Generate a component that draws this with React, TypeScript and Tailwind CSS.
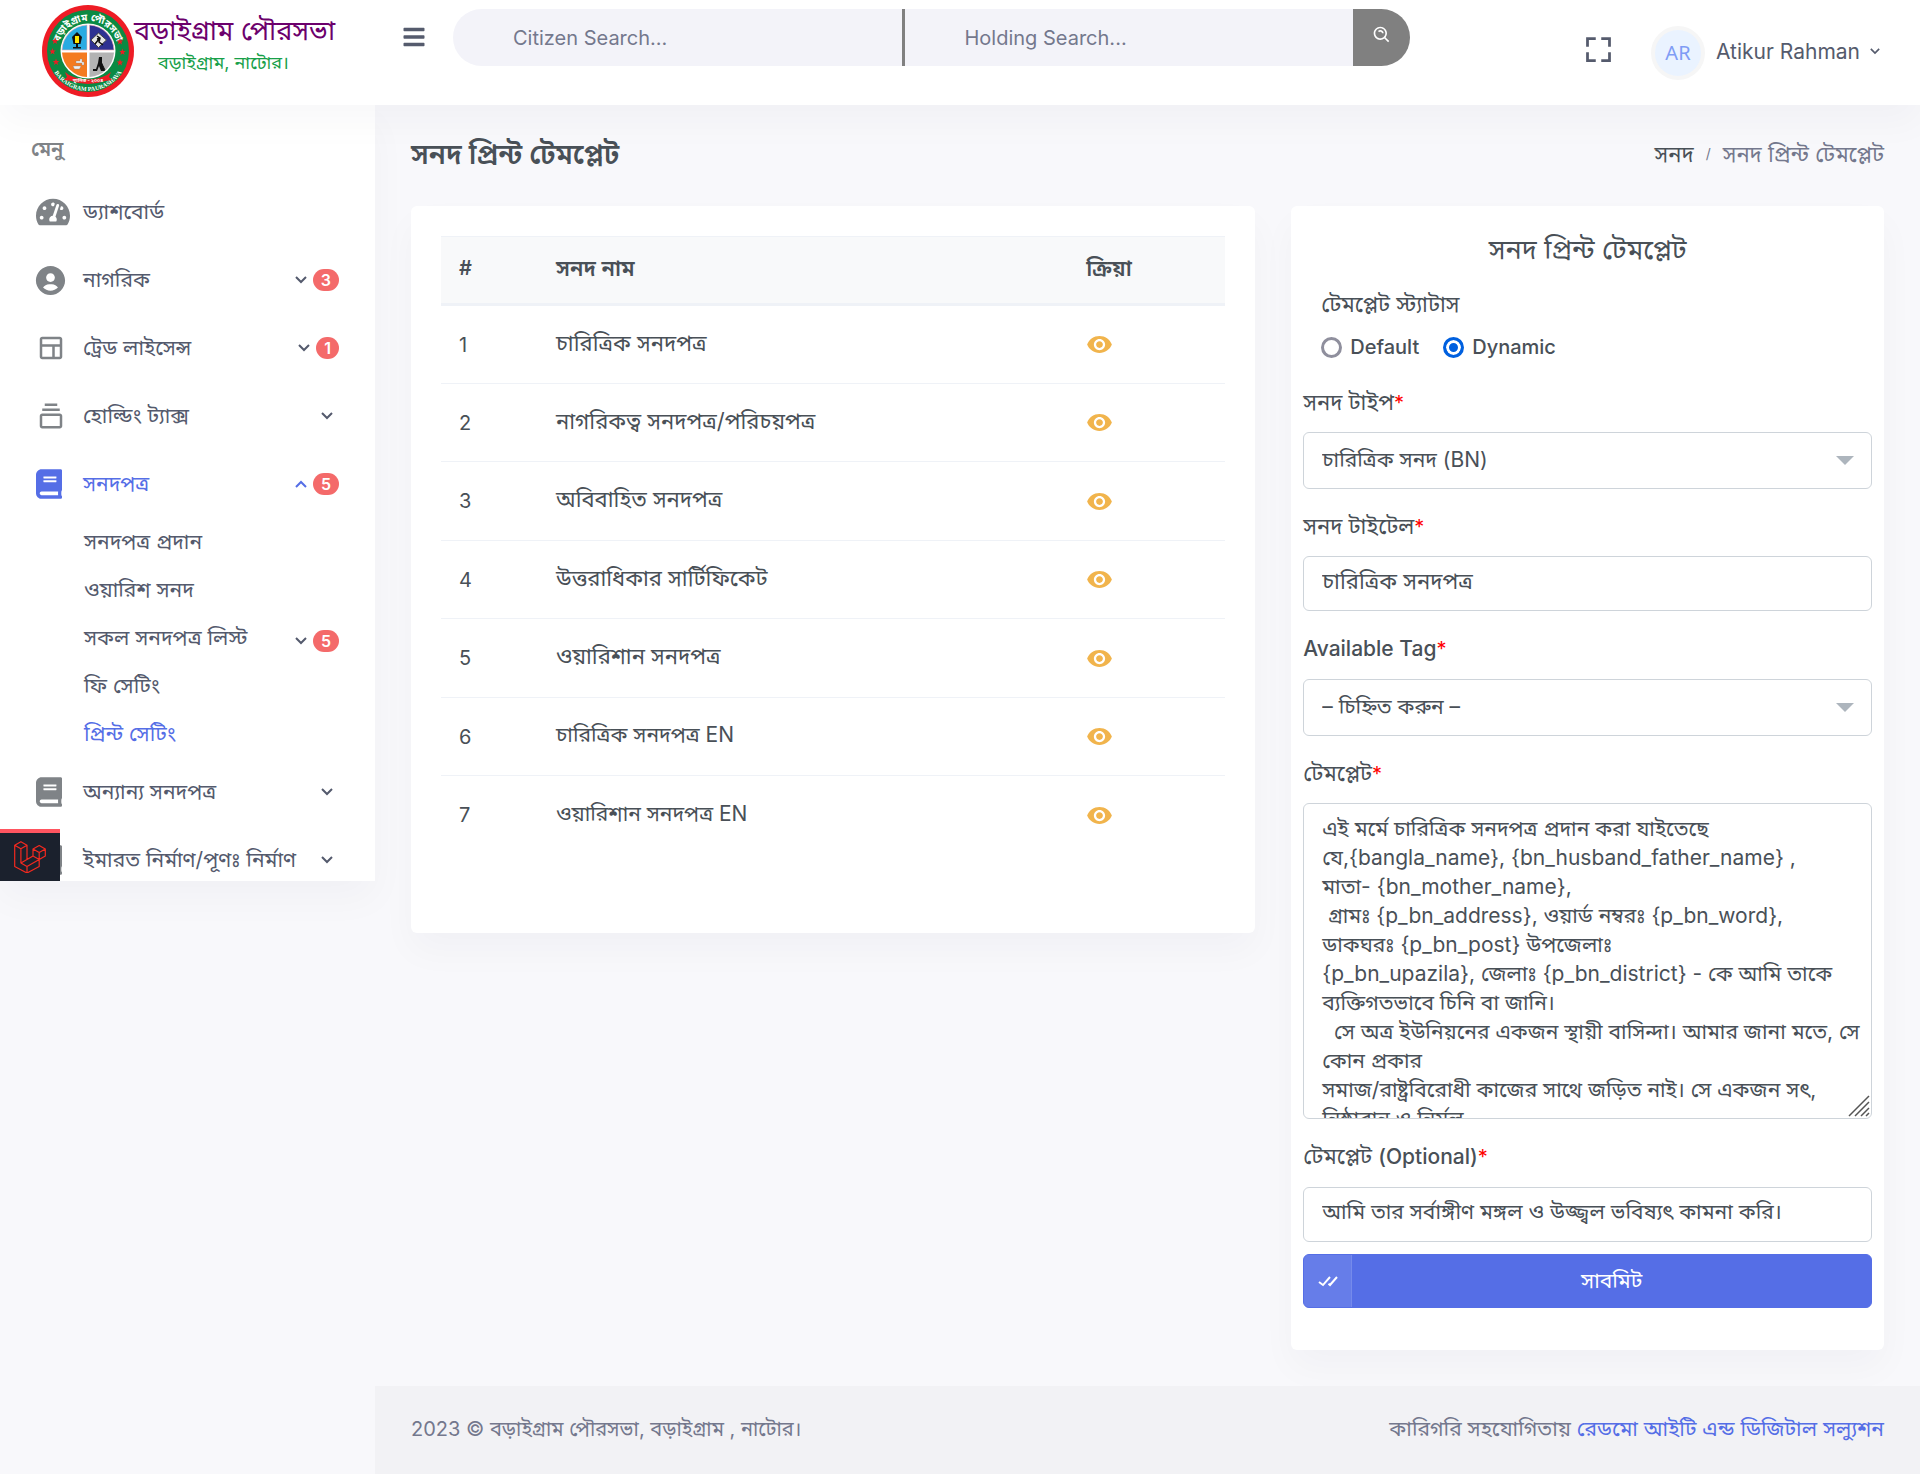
import { useState } from "react";
import type { ReactNode } from "react";
import {
  BiCheckDouble,
  BiCollection,
  BiFullscreen,
  BiLayout,
  BiSearchAlt,
  BiSolidUserCircle,
} from "react-icons/bi";
import { FaBars, FaBook, FaTachometerAlt } from "react-icons/fa";
import { MdVisibility } from "react-icons/md";

const rows = [
  "চারিত্রিক সনদপত্র",
  "নাগরিকত্ব সনদপত্র/পরিচয়পত্র",
  "অবিবাহিত সনদপত্র",
  "উত্তরাধিকার সার্টিফিকেট",
  "ওয়ারিশান সনদপত্র",
  "চারিত্রিক সনদপত্র EN",
  "ওয়ারিশান সনদপত্র EN",
];

const templateText = [
  "এই মর্মে চারিত্রিক সনদপত্র প্রদান করা যাইতেছে",
  "যে,{bangla_name}, {bn_husband_father_name} ,",
  "মাতা- {bn_mother_name},",
  " গ্রামঃ {p_bn_address}, ওয়ার্ড নম্বরঃ {p_bn_word},",
  "ডাকঘরঃ {p_bn_post} উপজেলাঃ",
  "{p_bn_upazila}, জেলাঃ {p_bn_district} - কে আমি তাকে",
  "ব্যক্তিগতভাবে চিনি বা জানি।",
  "  সে অত্র ইউনিয়নের একজন স্থায়ী বাসিন্দা। আমার জানা মতে, সে",
  "কোন প্রকার",
  "সমাজ/রাষ্ট্রবিরোধী কাজের সাথে জড়িত নাই। সে একজন সৎ,",
  "নিষ্ঠাবান ও নির্মল",
].join("\n");

function Chevron({ up = false, small = false }: { up?: boolean; small?: boolean }) {
  return (
    <svg viewBox="0 0 12 8" className={small ? "w-[10px]" : "w-3"} fill="none" stroke="currentColor" strokeWidth="2">
      <path d={up ? "M1 7 6 2l5 5" : "M1 1l5 5 5-5"} />
    </svg>
  );
}

function Badge({ children }: { children: ReactNode }) {
  return (
    <span className="rounded-full bg-[#f46a6a] px-2 text-base leading-[22px] font-semibold text-white">
      {children}
    </span>
  );
}

type ItemProps = {
  icon: ReactNode;
  label: string;
  badge?: string;
  active?: boolean;
  open?: boolean;
  plain?: boolean;
};

function MenuItem({ icon, label, badge, active, open, plain }: ItemProps) {
  return (
    <a
      href="#"
      className={`flex h-[68px] items-center pr-9 pl-9 ${active ? "text-[#556ee6]" : "text-[#545a6d]"}`}
    >
      <span className={`flex w-[47px] shrink-0 items-center ${active ? "text-[#556ee6]" : "text-[#7f8387]"}`}>
        {icon}
      </span>
      <span className="grow pb-px text-[21px] whitespace-nowrap">{label}</span>
      {!plain && (
        <span className={`flex shrink-0 items-center gap-[6px] ${badge ? "" : "pr-[6px]"}`}>
          <Chevron up={open} />
          {badge && <Badge>{badge}</Badge>}
        </span>
      )}
    </a>
  );
}

function SubItem({ label, badge, active }: { label: string; badge?: string; active?: boolean }) {
  return (
    <a
      href="#"
      className={`flex h-12 items-center justify-between pr-9 pl-[84px] text-[21px] ${active ? "text-[#556ee6]" : "text-[#545a6d]"}`}
    >
      {label}
      {badge && (
        <span className="flex items-center gap-[6px] pt-[6px]">
          <Chevron />
          <Badge>{badge}</Badge>
        </span>
      )}
    </a>
  );
}

function Star({ x, y }: { x: number; y: number }) {
  return (
    <path
      transform={`translate(${x} ${y})`}
      fill="#ed1c24"
      d="M0-3.4.9-1.1 3.3-1 1.4.5 2 2.9 0 1.5-2 2.9-1.4.5-3.3-1-.9-1.1z"
    />
  );
}

function Emblem() {
  return (
    <svg viewBox="0 0 92 92" className="size-[92px] shrink-0" role="img" aria-label="Baraigram Paurashava">
      <defs>
        <path id="arc-top" d="M16 46a30 30 0 0 1 60 0" />
        <path id="arc-bottom" d="M6 46a40 40 0 0 0 80 0" />
      </defs>
      <circle cx="46" cy="46" r="46" fill="#ee1c25" />
      <circle cx="46" cy="46" r="41" fill="#0b8a43" />
      <text fontSize="10" fontWeight="700" fill="#fff" textAnchor="middle">
        <textPath href="#arc-top" startOffset="50%">
          বড়াইগ্রাম পৌরসভা
        </textPath>
      </text>
      <text fontSize="6" fontWeight="700" fill="#fff" textAnchor="middle" fontFamily="Liberation Serif, serif">
        <textPath href="#arc-bottom" startOffset="50%">
          BARAIGRAM PAURASHAVA
        </textPath>
      </text>
      <Star x={13} y={36} />
      <Star x={10.5} y={46.5} />
      <Star x={14} y={57} />
      <Star x={78} y={36.5} />
      <Star x={80.5} y={47} />
      <Star x={78} y={57.5} />
      <circle cx="46" cy="46" r="27.5" fill="#fff" />
      <path d="M45 45V20a26 26 0 0 0-25 25z" fill="#29abe2" stroke="#f3b0b3" strokeWidth=".6" />
      <path d="M47.5 45V20A26 26 0 0 1 72 45z" fill="#2e3192" stroke="#f3b0b3" strokeWidth=".6" />
      <path d="M45 47.500V72a26 26 0 0 1-25-24.500z" fill="#f47b20" />
      <path d="M47.500 47.500V72A26 26 0 0 0 72 47.500z" fill="#b3b3b3" />
      <path d="M35 27l5 5-1.500 7h-7L30 32z" fill="#111" />
      <path d="M33 31h4v7h-4z" fill="#ffe600" />
      <path d="M34 39h2v3h3v1.500h-8V42h3z" fill="#111" />
      <path d="M56.500 28l8 7-8 7.500-7.500-7.500z" fill="#e6e6e6" stroke="#444" />
      <path d="M55 31l3 2-1 4 4 3M57 34l-4 5M58 33l-3 1" stroke="#111" strokeWidth="1.500" fill="none" />
      <path d="M31 61h8l-1.500 3h-5zM34 56h4v-2h2v3h2v3h-2v-2h-6z" fill="#f2f2f2" stroke="#888" strokeWidth=".4" />
      <path d="M57 52h3v6l3 8h-4l-2-5-2 5h-4v-2h3l2-6z" fill="#111" />
      <path d="M58 55l5 10" stroke="#111" />
      <path d="M23 67l4 3q19 9 38 0l4-3-2 5 3 3-7 1q-17 6-34 0l-7-1 3-3z" fill="#ed1c24" />
      <text x="46" y="77" fontSize="5" fontWeight="700" fill="#fff" textAnchor="middle">
        স্থাপিত - ২০০৪
      </text>
    </svg>
  );
}

function Header() {
  return (
    <header className="relative z-10 flex h-[105px] items-start bg-white shadow-[0_18px_36px_rgba(18,38,63,0.03)]">
      <a href="#" className="flex w-[375px] shrink-0 items-start pt-[5px] pl-[42px]">
        <Emblem />
        <span className="flex flex-col pt-2 whitespace-nowrap">
          <span className="text-[27px] leading-9 text-[#6c006c]">বড়াইগ্রাম পৌরসভা</span>
          <span className="pl-6 text-lg leading-7 text-[#17a049]">বড়াইগ্রাম, নাটোর।</span>
        </span>
      </a>
      <button type="button" aria-label="Toggle menu" className="mt-[25px] ml-[27px] text-[#555b6d]">
        <FaBars className="size-6" />
      </button>
      <form className="mt-[9px] ml-[27px] flex h-[57px] max-w-[957px] grow overflow-hidden rounded-full" onSubmit={(e) => e.preventDefault()}>
        <input
          aria-label="Citizen search"
          placeholder="Citizen Search..."
          className="min-w-0 flex-1 border-r-[3px] border-[#808080] bg-[#f3f3f9] px-[60px] text-xl outline-none placeholder:text-[#74788d]"
        />
        <input
          aria-label="Holding search"
          placeholder="Holding Search..."
          className="min-w-0 flex-1 bg-[#f3f3f9] px-[60px] text-xl outline-none placeholder:text-[#74788d]"
        />
        <button type="submit" aria-label="Search" className="flex w-[57px] justify-center bg-[#808080] pt-4 text-white">
          <BiSearchAlt className="size-5" />
        </button>
      </form>
      <div className="ml-auto flex items-center pt-[26px] pr-10 text-[#555b6d]">
        <button type="button" aria-label="Full screen" className="mr-9 mb-2">
          <BiFullscreen className="size-[33px]" />
        </button>
        <button type="button" className="flex items-center text-[21px]">
          <span className="mr-[11px] flex size-[54px] items-center justify-center rounded-full border-4 border-[#f6f6f6] bg-[#eaf3ff] font-['Noto_Sans'] text-xl text-[#7f9cf5]">
            AR
          </span>
          <span className="mr-[10px] pb-[3px]">Atikur Rahman</span>
          <span className="pb-[3px]">
            <Chevron small />
          </span>
        </button>
      </div>
    </header>
  );
}

function Sidebar() {
  return (
    <aside className="relative h-[776px] w-[375px] shrink-0 overflow-hidden bg-white shadow-[0_18px_36px_rgba(18,38,63,0.03)]">
      <p className="flex h-[73px] items-center pt-[14px] pl-[31px] text-xl font-semibold text-[#7f8387]">মেনু</p>
      <nav>
        <MenuItem icon={<FaTachometerAlt className="size-[34px]" />} label="ড্যাশবোর্ড" plain />
        <MenuItem icon={<BiSolidUserCircle className="-ml-[3px] size-[35px]" />} label="নাগরিক" badge="3" />
        <MenuItem icon={<BiLayout className="size-[30px]" />} label="ট্রেড লাইসেন্স" badge="1" />
        <MenuItem icon={<BiCollection className="size-[30px]" />} label="হোল্ডিং ট্যাক্স" />
        <MenuItem icon={<FaBook className="h-[30px] w-[26px]" />} label="সনদপত্র" badge="5" active open />
        <div>
          <SubItem label="সনদপত্র প্রদান" />
          <SubItem label="ওয়ারিশ সনদ" />
          <SubItem label="সকল সনদপত্র লিস্ট" badge="5" />
          <SubItem label="ফি সেটিং" />
          <SubItem label="প্রিন্ট সেটিং" active />
        </div>
        <MenuItem icon={<FaBook className="h-[30px] w-[26px]" />} label="অন্যান্য সনদপত্র" />
        <MenuItem icon={<FaBook className="h-[30px] w-[26px]" />} label="ইমারত নির্মাণ/পূণঃ নির্মাণ" />
      </nav>
      <button
        type="button"
        aria-label="Debug bar"
        className="absolute bottom-0 left-0 flex h-[52px] w-[60px] items-center justify-center border-t-4 border-[#ff5560] bg-[#1b212d]"
      >
        <svg viewBox="0 0 32 32" className="size-8" fill="none" stroke="#f4291f" strokeWidth="1.200" strokeLinejoin="round">
          <path d="M.7 4.200 6.900.7l6.100 3.500v14.200L19 15V8l6.200-3.500L31.300 8v7l-6.100 3.500v7L13 32 .7 25.500zM.7 4.200l6.200 3.500L13 4.200M6.900 7.700v14.200l6.100 3.500L25.200 18.500 19 15 6.900 21.900M19 8l6.200 3.500L31.300 8M25.200 11.500v7M13 25.400V32" />
        </svg>
      </button>
    </aside>
  );
}

function CertificateTable() {
  return (
    <section className="col-span-7 self-start rounded-md bg-white px-[30px] pt-[30px] pb-[78px] shadow-[0_18px_36px_rgba(18,38,63,0.03)]">
      <table className="w-full table-fixed border-collapse text-left text-[22px] text-[#495057]">
        <thead>
          <tr className="h-[68px] border-t border-b-[3px] border-[#eff2f7] bg-[#f8f9fa]">
            <th className="w-[97px] px-[18px] pb-1 text-xl font-semibold">#</th>
            <th className="px-[18px] pb-1 font-semibold">সনদ নাম</th>
            <th className="w-[157px] px-[18px] pb-1 font-semibold">ক্রিয়া</th>
          </tr>
        </thead>
        <tbody>
          {rows.map((name, i) => (
            <tr key={name} className="h-[79px] border-b border-[#eff2f7] last:border-b-0 even:h-[78px]">
              <td className="px-[18px] text-xl">{i + 1}</td>
              <td className={`px-[18px] pb-[3px] ${name.endsWith("EN") ? "text-[21px]" : "text-[22px]"}`}>{name}</td>
              <td className="px-[18px]">
                <button type="button" aria-label={`View ${name}`} className="block text-[#f1b44c]">
                  <MdVisibility className="size-[27px]" />
                </button>
              </td>
            </tr>
          ))}
        </tbody>
      </table>
    </section>
  );
}

function Label({ htmlFor, children }: { htmlFor: string; children: ReactNode }) {
  return (
    <label htmlFor={htmlFor} className="mb-[15px] block text-[22px] leading-[30px]">
      {children}
      <span className="text-xl text-[#ff0000]">*</span>
    </label>
  );
}

function SelectBox({ id, option }: { id: string; option: string }) {
  return (
    <div className="relative mb-[22px]">
      <select
        id={id}
        className="block h-[57px] w-full appearance-none rounded-md border border-[#ced4da] bg-white px-[18px] pb-[2px] text-[21px] outline-none"
      >
        <option>{option}</option>
      </select>
      <svg viewBox="0 0 18 9" className="pointer-events-none absolute top-6 right-[18px] w-[18px]" fill="#adb5bd">
        <path d="M0 0h18l-9 9z" />
      </svg>
    </div>
  );
}

function TemplateForm() {
  const [status, setStatus] = useState("Dynamic");
  return (
    <form
      className="col-span-5 rounded-md bg-white px-3 pt-6 pb-[42px] text-[21px] text-[#495057] shadow-[0_18px_36px_rgba(18,38,63,0.03)]"
      onSubmit={(e) => e.preventDefault()}
    >
      <h2 className="mb-4 text-center text-[27px] leading-10">সনদ প্রিন্ট টেমপ্লেট</h2>
      <fieldset className="mb-[25px] px-[18px]">
        <legend className="text-[22px] leading-9">টেমপ্লেট স্ট্যাটাস</legend>
        <div className="mt-[10px] flex gap-6">
          {["Default", "Dynamic"].map((s) => (
            <label key={s} className="flex items-center gap-2 text-xl leading-[30px] font-medium">
              <input
                type="radio"
                name="status"
                checked={status === s}
                onChange={() => setStatus(s)}
                className="size-[21px] appearance-none rounded-full border-[3px] border-[#8f8f9d] bg-white checked:border-[#0060df] checked:bg-[#0060df] checked:shadow-[inset_0_0_0_3px_#fff]"
              />
              {s}
            </label>
          ))}
        </div>
      </fieldset>
      <Label htmlFor="type">সনদ টাইপ</Label>
      <SelectBox id="type" option="চারিত্রিক সনদ (BN)" />
      <Label htmlFor="title">সনদ টাইটেল</Label>
      <input
        id="title"
        defaultValue="চারিত্রিক সনদপত্র"
        className="mb-[22px] block h-[55px] w-full rounded-md border border-[#ced4da] px-[18px] pb-[2px] text-[22px] outline-none"
      />
      <Label htmlFor="tag">
        <span className="text-[21px] font-medium">Available Tag</span>
      </Label>
      <SelectBox id="tag" option="– চিহ্নিত করুন –" />
      <Label htmlFor="template">টেমপ্লেট</Label>
      <div className="relative mb-[22px]">
        <textarea
          id="template"
          defaultValue={templateText}
          className="block h-[316px] w-full resize-none overflow-hidden rounded-md border border-[#ced4da] px-[18px] py-[10px] leading-[29px] whitespace-pre outline-none"
        />
        <svg viewBox="0 0 22 22" className="pointer-events-none absolute right-[2px] bottom-[2px] size-[22px]" fill="none" stroke="#555" strokeWidth="1.500">
          <path d="M1 21 21 1M7 21 21 7M13 21l8-8M18 21l3-3" />
        </svg>
      </div>
      <Label htmlFor="optional">
        টেমপ্লেট <span className="text-[21px] font-medium">(Optional)</span>
      </Label>
      <input
        id="optional"
        defaultValue="আমি তার সর্বাঙ্গীণ মঙ্গল ও উজ্জ্বল ভবিষ্যৎ কামনা করি।"
        className="mb-3 block h-[55px] w-full rounded-md border border-[#ced4da] px-[18px] pb-[2px] outline-none"
      />
      <button type="submit" className="flex h-[54px] w-full overflow-hidden rounded-md border border-[#556ee6] bg-[#556ee6] text-white">
        <span className="flex h-full w-12 items-center justify-center border-r border-white/10 bg-white/10">
          <BiCheckDouble className="size-6" />
        </span>
        <span className="flex h-full grow items-center justify-center">সাবমিট</span>
      </button>
    </form>
  );
}

export default function App() {
  return (
    <div className="flex min-h-screen flex-col bg-[#f8f8fb] font-[Inter,'Noto_Sans_Bengali',sans-serif] text-[#495057]">
      <Header />
      <div className="flex grow items-start">
        <Sidebar />
        <div className="flex min-w-0 grow flex-col self-stretch">
          <main className="grow px-9 pt-[27px] pb-9">
            <div className="mb-[30px] flex h-11 items-center justify-between">
              <h1 className="text-[28px] leading-10 font-semibold">সনদ প্রিন্ট টেমপ্লেট</h1>
              <nav aria-label="Breadcrumb" className="flex items-center gap-3 text-[22px]">
                <a href="#">সনদ</a>
                <span className="text-sm text-[#74788d]">/</span>
                <span className="text-[#74788d]">সনদ প্রিন্ট টেমপ্লেট</span>
              </nav>
            </div>
            <div className="grid grid-cols-12 gap-9">
              <CertificateTable />
              <TemplateForm />
            </div>
          </main>
          <footer className="flex h-[90px] items-center justify-between bg-[#f2f2f5] px-9 pb-1 text-xl text-[#74788d]">
            <span>2023 © বড়াইগ্রাম পৌরসভা, বড়াইগ্রাম , নাটোর।</span>
            <span className="text-[21px]">
              কারিগরি সহযোগিতায়{" "}
              <a href="#" className="text-[#556ee6]">
                রেডমো আইটি এন্ড ডিজিটাল সল্যুশন
              </a>
            </span>
          </footer>
        </div>
      </div>
    </div>
  );
}
